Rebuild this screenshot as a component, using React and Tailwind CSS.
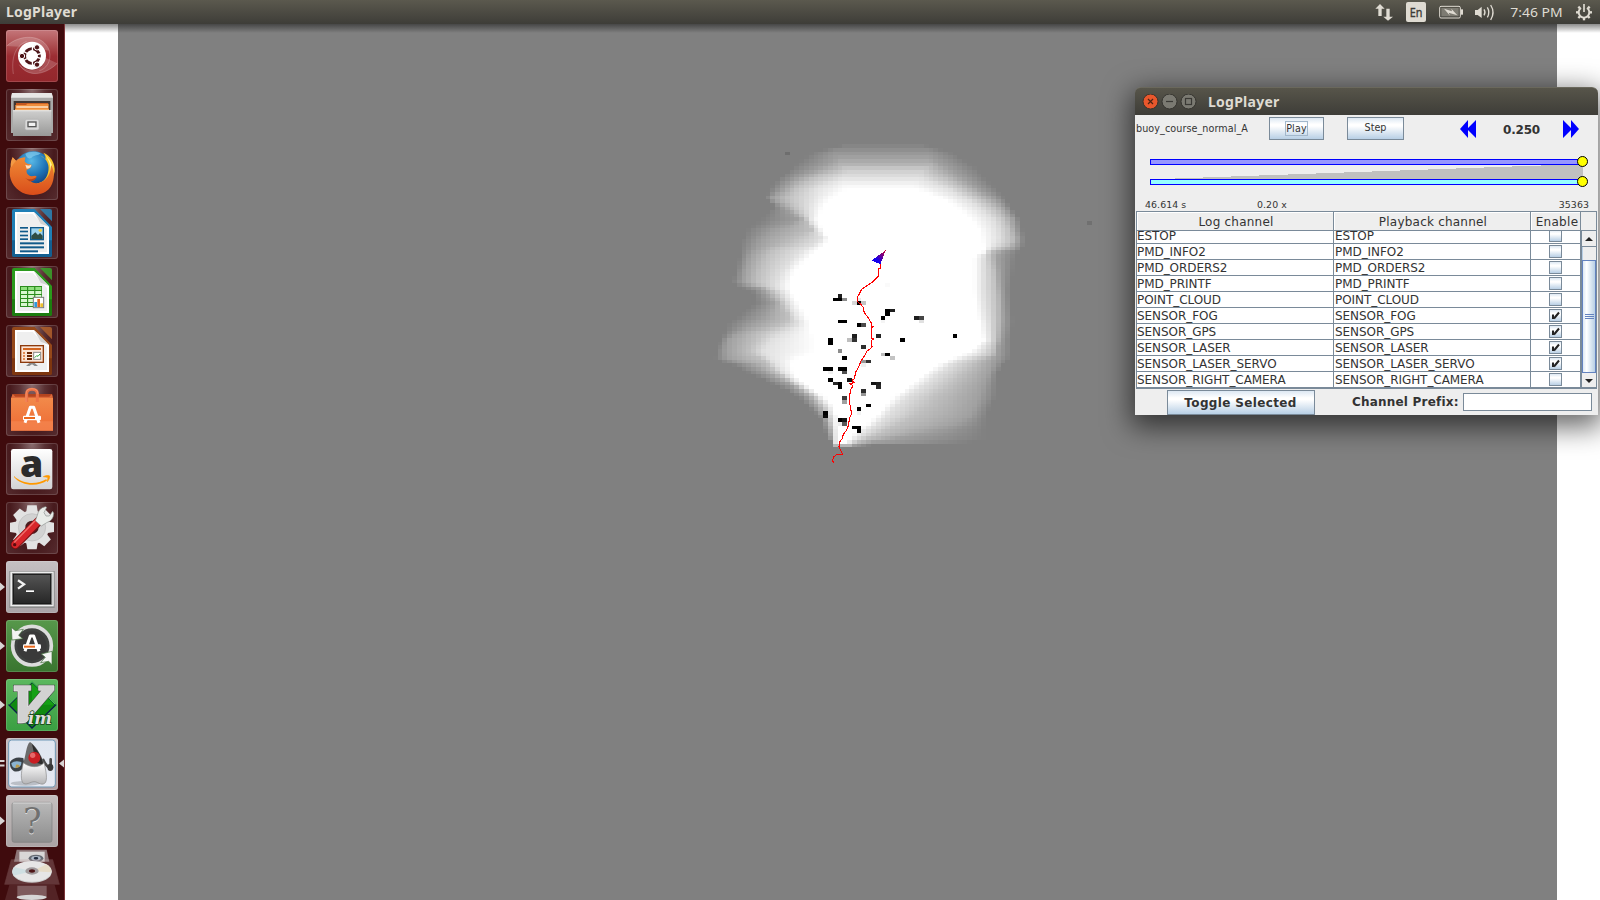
import React from "react";

/* ---------- occupancy map ---------- */

const CELL_W = 1439 / 300;
const CELL_H = 876 / 240;
const LEVELS = [128, 160, 192, 225, 255];

// Survey units are thirds of a pixel, origin at screen (700, 140).
// [y, peak, five rising x positions, five falling x positions]
const PROFILE = [
  [8, 129, 480, 490, 500, 510, 520, 540, 560, 580, 600, 620],
  [22, 136, 400, 470, 500, 510, 520, 540, 560, 580, 620, 700],
  [38, 150, 335, 430, 500, 500, 500, 580, 580, 600, 660, 755],
  [55, 163, 310, 410, 470, 500, 510, 590, 600, 630, 690, 785],
  [72, 178, 290, 385, 450, 500, 520, 600, 640, 670, 720, 810],
  [90, 205, 268, 345, 415, 490, 510, 600, 630, 690, 750, 835],
  [110, 222, 242, 300, 350, 440, 500, 590, 650, 725, 780, 850],
  [130, 242, 222, 265, 310, 380, 470, 590, 705, 765, 810, 872],
  [148, 255, 210, 248, 285, 345, 440, 650, 745, 795, 835, 890],
  [175, 255, 195, 215, 260, 335, 392, 725, 795, 840, 880, 915],
  [200, 255, 225, 250, 280, 325, 370, 770, 835, 880, 910, 932],
  [240, 255, 180, 300, 318, 328, 352, 812, 878, 915, 940, 958],
  [270, 255, 140, 225, 335, 350, 370, 838, 890, 930, 945, 967],
  [295, 255, 130, 190, 290, 368, 386, 845, 895, 935, 955, 972],
  [310, 255, 122, 180, 270, 350, 380, 848, 890, 935, 952, 972],
  [326, 255, 120, 170, 225, 315, 358, 858, 870, 900, 940, 966],
  [336, 255, 119, 160, 212, 300, 345, 850, 860, 875, 905, 955],
  [350, 255, 117, 150, 200, 285, 330, 820, 850, 870, 892, 948],
  [390, 255, 108, 135, 180, 250, 285, 820, 850, 880, 897, 940],
  [430, 255, 94, 130, 170, 230, 270, 820, 850, 885, 900, 935],
  [445, 255, 125, 180, 200, 232, 268, 820, 850, 885, 902, 932],
  [460, 255, 165, 195, 225, 248, 275, 820, 852, 888, 905, 932],
  [490, 255, 165, 225, 245, 265, 295, 825, 855, 890, 907, 935],
  [530, 255, 115, 195, 265, 285, 320, 832, 862, 890, 910, 938],
  [550, 255, 85, 165, 255, 300, 328, 840, 865, 890, 910, 940],
  [580, 255, 72, 110, 175, 250, 335, 845, 868, 889, 905, 935],
  [600, 255, 62, 85, 165, 215, 345, 850, 870, 888, 900, 932],
  [630, 255, 48, 80, 150, 190, 350, 815, 850, 880, 892, 935],
  [645, 255, 46, 82, 160, 195, 320, 780, 830, 875, 890, 935],
  [660, 255, 42, 90, 190, 215, 280, 745, 782, 835, 880, 930],
  [672, 255, 90, 150, 200, 225, 275, 720, 755, 820, 878, 912],
  [700, 255, 145, 200, 232, 250, 280, 675, 715, 790, 868, 890],
  [740, 255, 235, 280, 297, 308, 325, 626, 665, 745, 848, 889],
  [770, 255, 295, 322, 340, 355, 375, 580, 620, 705, 838, 887],
  [800, 255, 322, 348, 368, 383, 400, 555, 585, 680, 825, 872],
  [830, 255, 358, 374, 385, 395, 410, 525, 558, 640, 805, 862],
  [850, 255, 366, 382, 391, 398, 411, 505, 532, 600, 770, 860],
  [870, 255, 373, 388, 396, 402, 412, 470, 505, 560, 705, 859],
  [890, 255, 382, 392, 397, 404, 412, 450, 478, 518, 620, 858],
  [905, 255, 392, 396, 398, 404, 412, 440, 455, 475, 530, 856],
  [911, 255, 395, 398, 402, 406, 414, 430, 440, 446, 455, 560],
  [921, 128, 395, 398, 402, 406, 414, 430, 440, 446, 455, 480],
];

function sample(x, y) {
  if (y <= PROFILE[0][0] || y >= PROFILE[PROFILE.length - 1][0]) return 128;
  let i = 0;
  while (PROFILE[i + 1][0] < y) i += 1;
  const a = PROFILE[i];
  const b = PROFILE[i + 1];
  const t = (y - a[0]) / (b[0] - a[0]);
  const row = a.map((v, k) => v + (b[k] - v) * t);
  const xs = row.slice(2);
  const gs = [...LEVELS, ...[...LEVELS].reverse()];
  if (x <= xs[0] || x >= xs[9]) return 128;
  let k = 0;
  while (k < 8 && xs[k + 1] < x) k += 1;
  const span = xs[k + 1] - xs[k] || 1;
  const g = gs[k] + (gs[k + 1] - gs[k]) * ((x - xs[k]) / span);
  return Math.min(row[1], g);
}

const HITS = [
  [418, 468, 30], [404, 479, 0], [418, 479, 0], [433, 479, 140], [461, 489, 215], [475, 489, 0], [490, 489, 195], [475, 479, 235],
  [418, 545, 0], [433, 545, 0], [475, 555, 0], [490, 555, 75], [562, 511, 0], [577, 511, 30], [562, 522, 0], [547, 534, 0], [547, 544, 245],
  [649, 534, 30], [664, 534, 70], [664, 545, 225], [461, 588, 30], [461, 599, 50], [447, 599, 190], [534, 588, 35], [606, 599, 0],
  [763, 588, 0], [389, 599, 0], [389, 610, 0], [418, 632, 140], [490, 621, 45], [433, 654, 0], [547, 643, 190], [562, 643, 0], [577, 654, 195],
  [490, 664, 150], [505, 664, 50], [490, 675, 240], [375, 687, 0], [389, 687, 0], [418, 687, 0], [433, 687, 0], [433, 697, 80], [389, 697, 240],
  [389, 720, 0], [447, 720, 20], [404, 730, 40], [418, 730, 0], [418, 741, 0], [519, 730, 20], [534, 730, 30], [534, 741, 40], [490, 753, 45],
  [490, 764, 150], [433, 775, 60], [433, 786, 160], [505, 796, 0], [475, 807, 0], [475, 819, 242], [375, 819, 0], [375, 830, 10], [418, 840, 0],
  [433, 840, 20], [433, 851, 90], [418, 851, 235], [461, 862, 0], [475, 862, 0], [475, 873, 0], [562, 435, 250],
  [260, 40, 110], [1104, 247, 112],
];

function buildCells() {
  const cells = [];
  for (let r = 32; r <= 122; r += 1) {
    for (let c = 120; c <= 190; c += 1) {
      const ux = ((c + 0.5) * CELL_W + 118 - 700) * 3;
      const uy = ((r + 0.5) * CELL_H + 24 - 140) * 3;
      const g = Math.round(sample(ux, uy));
      if (g > 128) cells.push([c, r, g]);
    }
  }
  HITS.forEach(([x, y, g]) => {
    // The stray return on the right lies outside the swept area.
    const ux = x === 1104 ? 1169 : x;
    cells.push([
      Math.floor((ux / 3 + 700 - 118) / CELL_W),
      Math.floor((y / 3 + 140 - 24) / CELL_H),
      g,
    ]);
  });
  return cells;
}

const CELLS = buildCells();

const TRACK =
  "541,366 543,376 541,385 534,387 536,408 516,427 498,439 484,449 478,462 472,470 472,484 482,493 490,502 490,510 494,519 505,534 513,548 515,559 520,559 514,564 515,594 520,597 515,601 516,620 512,626 500,634 495,646 484,661 476,680 467,697 463,716 457,720 460,727 466,728 449,730 457,736 457,741 452,748 452,760 449,760 449,790 453,810 454,824 449,834 445,857 440,870 430,883 427,895 418,908 417,920 428,944 420,942 408,945 401,951 397,963 403,968";

function MapView() {
  return (
    <svg className="block h-[876px] w-[1439px] shrink-0 bg-[#808080]" viewBox="118 24 1439 876" shapeRendering="crispEdges">
      {CELLS.map(([c, r, g], i) => {
        const x0 = Math.round(118 + c * CELL_W);
        const x1 = Math.round(118 + (c + 1) * CELL_W);
        const y0 = Math.round(24 + r * CELL_H);
        const y1 = Math.round(24 + (r + 1) * CELL_H);
        return <rect key={i} x={x0} y={y0} width={x1 - x0} height={y1 - y0} fill={`rgb(${g},${g},${g})`} />;
      })}
      <linearGradient id="pose" x1="0" y1="1" x2="1" y2="0">
        <stop offset=".35" stopColor="#1400ee" />
        <stop offset="1" stopColor="#d00028" />
      </linearGradient>
      <g transform="translate(700 140) scale(.33333)">
        <polyline points={TRACK} fill="none" stroke="#f00" strokeWidth="3.2" />
        <path d="M515 361L541 373L557 331Z" fill="url(#pose)" />
      </g>
    </svg>
  );
}

/* ---------- launcher icons, drawn on a 156 unit tile ---------- */

const GLASS = "bg-[radial-gradient(ellipse_at_50%_0%,#8a6c6e_0%,#5a3134_35%,#471a1d_60%,#562c2f_100%)]";

function UbuntuIcon() {
  return (
    <>
      <g fill="none" stroke="#fff" strokeOpacity=".32" strokeWidth="2">
        <path d="M2 48C40 12 112 10 130 62C138 96 118 118 100 122" />
        <path d="M22 132C16 90 24 48 62 34" />
        <path d="M40 104C62 140 112 140 154 100" />
      </g>
      <path d="M2 48C40 12 112 10 130 62L118 60C100 30 60 30 40 50Z" fill="#fff" opacity=".18" />
      <path d="M40 104C62 140 112 140 154 100L120 84C110 122 70 130 40 104Z" fill="#fff" opacity=".18" />
      <circle cx="78" cy="79" r="42" fill="#400" opacity=".3" />
      <circle cx="78" cy="77" r="42" fill="#fff" />
      <circle cx="78" cy="78" r="22" fill="none" stroke="#4c1518" strokeWidth="9" />
      <g stroke="#fff" strokeWidth="4">
        <path d="M78 78L48 62M78 78L48 94M78 78L107 70M78 78L107 86M78 78L80 46M78 78L80 110" />
      </g>
      <circle cx="78" cy="78" r="17" fill="#fff" />
      <g fill="#4c1518" stroke="#fff" strokeWidth="3">
        <circle cx="48" cy="78" r="8" /><circle cx="93" cy="52" r="8" /><circle cx="93" cy="104" r="8" />
      </g>
    </>
  );
}

function FilesIcon() {
  return (
    <>
      <path d="M18 12H137L141 26V132H15V26Z" fill="#a9a9a8" />
      <path d="M18 12H137L141 26H15Z" fill="#e7e7e6" />
      <path d="M23 36H133V70H23Z" fill="#413632" />
      <path d="M30 42H126V64H30Z" fill="#c4571f" />
      <path d="M28 48H60L64 44H128V68H28Z" fill="#ef8d3c" />
      <path d="M31 52H126V56H31Z" fill="#fff0d8" />
      <path d="M27 60H129V66H27Z" fill="#f6a85c" />
      <path d="M21 64H136V141H21Z" fill="url(#gSilver)" />
      <path d="M21 64H136V67H21Z" fill="#e9e9e9" />
      <rect x="57" y="91" width="42" height="32" rx="5" fill="#dadada" stroke="#b1b1b1" strokeWidth="2" />
      <rect x="64" y="97" width="28" height="18" fill="#555" />
      <rect x="68" y="101" width="20" height="10" fill="#f2f2f2" />
    </>
  );
}

function FirefoxIcon() {
  return (
    <>
      <circle cx="82" cy="68" r="58" fill="url(#gGlobe)" />
      <path d="M58 18C66 10 92 8 104 16C96 24 84 20 76 30C66 34 62 28 58 18Z" fill="#8fd6f3" opacity=".6" />
      <path d="M102 22C124 34 132 52 126 74C120 100 98 108 90 104C116 120 140 104 146 70C148 46 134 22 112 14C118 22 120 28 118 34Z" fill="#f7c52c" />
      <path d="M118 22C138 40 144 62 138 84L132 82C136 60 132 40 118 22Z" fill="#fff29a" />
      <path d="M20 28L30 38C38 30 50 28 58 28L56 40C62 50 70 48 76 50C78 58 70 62 62 66C60 74 64 80 72 84C82 86 88 80 92 86C88 94 84 98 74 100C86 110 108 106 120 92C132 80 134 64 136 50C148 72 146 104 128 124C108 144 66 148 40 128C14 110 6 80 14 54C14 46 18 36 20 28Z" fill="url(#gFox)" />
      <path d="M20 28L30 38C24 46 20 50 16 58C12 48 16 36 20 28Z" fill="#f39a45" />
      <path d="M58 50C64 54 72 52 76 50C76 58 70 62 62 62Z" fill="#fbe2c4" />
      <path d="M58 90C66 96 80 96 92 86C88 96 80 100 70 100Z" fill="#9c2b12" opacity=".6" />
    </>
  );
}

function DocFrame({ color, dark, tint, children }) {
  return (
    <>
      <path d="M24 6H86L138 60V144Q138 150 132 150H24Q18 150 18 144V12Q18 6 24 6Z" fill={color} />
      <path d="M18 100H138V144Q138 150 132 150H24Q18 150 18 144Z" fill={dark} opacity=".6" />
      <path d="M102 6H132Q138 6 138 12V43Z" fill={tint} opacity=".85" />
      <path d="M27 15H84L129 60V141H27Z" fill="#fff" />
      <path d="M33 21H80L123 66V135H33Z" fill="#efefef" />
      <path d="M84 15L129 60L104 50Z" fill="#d2d2d2" />
      {children}
    </>
  );
}

function WriterIcon() {
  return (
    <DocFrame color="#1f7fb6" dark="#0b4a78" tint="#2a86b8">
      <g fill="#115a8a">
        <rect x="42" y="60" width="24" height="5" /><rect x="42" y="71" width="24" height="5" />
        <rect x="42" y="83" width="24" height="5" /><rect x="42" y="94" width="24" height="5" />
        <rect x="42" y="106" width="72" height="6" /><rect x="42" y="118" width="72" height="6" /><rect x="42" y="130" width="54" height="6" />
      </g>
      <rect x="72" y="60" width="42" height="40" fill="#115a8a" />
      <rect x="76" y="64" width="34" height="32" fill="#9fd4ef" />
      <path d="M76 96V86L88 76L96 84L102 78L110 86V96Z" fill="#2f4d44" />
      <circle cx="103" cy="70" r="5" fill="#f3cf3e" />
    </DocFrame>
  );
}

function CalcIcon() {
  return (
    <DocFrame color="#2b9a1c" dark="#126a07" tint="#3aa52c">
      <rect x="42" y="60" width="66" height="63" fill="#2b8c1c" />
      {[0, 1, 2, 3, 4].map((r) =>
        [0, 1, 2].map((c) => (
          <rect key={`${r}${c}`} x={45 + c * 21.5} y={63 + r * 12} width="18" height="9" fill={r ? "#d9f7cf" : "#8fe07d"} />
        )),
      )}
      <rect x="82" y="94" width="31" height="31" fill="#fff" stroke="#7a7a7a" strokeWidth="3" />
      <rect x="85" y="108" width="8" height="15" fill="#2f97dc" />
      <rect x="94" y="99" width="8" height="24" fill="#e2631c" />
      <rect x="103" y="112" width="8" height="11" fill="#edc02d" />
    </DocFrame>
  );
}

function ImpressIcon() {
  return (
    <DocFrame color="#95481a" dark="#6f2c08" tint="#b0602c">
      <rect x="44" y="62" width="68" height="50" fill="#fbe4d6" stroke="#8d3a0d" strokeWidth="4" />
      <rect x="51" y="69" width="54" height="6" fill="#d2641f" />
      <g fill="#e28a53"><rect x="51" y="81" width="6" height="6" /><rect x="51" y="90" width="6" height="6" /><rect x="51" y="99" width="6" height="6" /></g>
      <g fill="#6b2604"><rect x="63" y="81" width="15" height="6" /><rect x="63" y="90" width="15" height="6" /><rect x="63" y="99" width="15" height="6" /></g>
      <rect x="83" y="82" width="21" height="21" fill="#fff" stroke="#8a8a8a" strokeWidth="3" />
      <path d="M86 98L92 92L96 94L102 87" fill="none" stroke="#2da43a" strokeWidth="3" />
      <path d="M70 114H86L96 123H86L78 118L70 123H60Z" fill="#8a8a8a" />
    </DocFrame>
  );
}

function LetterA() {
  return (
    <>
      <path d="M57 116L73 70H83L99 116" fill="none" stroke="#fff" strokeWidth="9" strokeLinejoin="round" />
      <rect x="51" y="95" width="54" height="14" rx="4" fill="#fff" />
      <rect x="54" y="99" width="33" height="6" fill="#ec6a1e" />
    </>
  );
}

function SoftwareIcon() {
  return (
    <>
      <path d="M20 30H138L141 44H15Z" fill="#b3441f" />
      <path d="M20 30L28 38H130L138 30L141 44H15Z" fill="#dd6a3b" />
      <path d="M15 42H141V140H15Z" fill="url(#gBag)" />
      <path d="M15 112H141V140H15Z" fill="#f58a55" opacity=".6" />
      <path d="M62 54V30Q62 16 78 16Q94 16 94 30V54" fill="none" stroke="#ee7346" strokeWidth="9" />
      <path d="M60 54V30Q60 14 78 14Q96 14 96 30" fill="none" stroke="#f7a07a" strokeWidth="2" />
      <LetterA />
    </>
  );
}

function AmazonIcon() {
  return (
    <>
      <rect x="15" y="18" width="124" height="121" rx="7" fill="url(#gPaper)" />
      <text x="77" y="101" textAnchor="middle" fontFamily="'Open Sans', sans-serif" fontWeight="800" fontSize="112" fill="#2b2b2b">a</text>
      <path d="M24 99C48 124 94 126 120 109L124 112C98 132 46 130 24 102Z" fill="#f90" />
      <path d="M112 101C120 97 128 97 131 99C132 104 128 112 124 116C124 110 127 105 125 103C122 102 116 102 112 101Z" fill="#f90" stroke="#f90" strokeWidth="2" />
    </>
  );
}

function SettingsIcon() {
  return (
    <>
      <g fill="#e2e2e2">
        {[0, 45, 90, 135, 180, 225, 270, 315].map((a) => (
          <path key={a} d="M64 10H92L96 34H60Z" transform={`rotate(${a} 78 76)`} />
        ))}
        <circle cx="78" cy="76" r="51" />
      </g>
      <circle cx="78" cy="76" r="41" fill="#d2d2d2" stroke="#bdbdbd" strokeWidth="2" />
      <circle cx="78" cy="76" r="20" fill="#4a1d1f" />
      <path d="M28 128L100 56" stroke="#7c0f12" strokeWidth="27" strokeLinecap="round" />
      <path d="M28 127L94 60" stroke="#d8262a" strokeWidth="22" strokeLinecap="round" />
      <path d="M26 120L86 58" stroke="#f0706c" strokeWidth="4" strokeLinecap="round" />
      <path d="M88 56L94 40Q98 18 118 14L122 16L114 32L120 42L130 42L140 28L143 34Q142 56 122 62L106 72Z" fill="#e9ece9" stroke="#8c9390" strokeWidth="2" />
      <circle cx="26" cy="128" r="5" fill="#5c0b0d" />
    </>
  );
}

function TerminalIcon() {
  return (
    <>
      <rect x="10" y="30" width="136" height="111" fill="#8b8b8b" />
      <rect x="13" y="32" width="130" height="104" fill="#eee" />
      <rect x="18" y="36" width="121" height="96" fill="#8d8d8d" />
      <rect x="22" y="40" width="112" height="88" fill="url(#gTerm)" stroke="#111" strokeWidth="3" />
      <path d="M36 58L54 70L36 83" fill="none" stroke="#f2f2f2" strokeWidth="7" />
      <rect x="60" y="88" width="24" height="5" fill="#fff" />
    </>
  );
}

function UpdaterIcon() {
  return (
    <>
      <circle cx="78" cy="78" r="56" fill="#3f4240" />
      <circle cx="78" cy="78" r="44" fill="#3a3a3a" />
      <circle cx="78" cy="77" r="58" fill="none" stroke="#dcdcdc" strokeWidth="11" />
      <path d="M18 60L16 22L28 32L52 28L38 46L50 56Z" fill="#f4f4f4" stroke="#3c6d35" strokeWidth="2" />
      <path d="M138 94L138 134L128 124L104 128L118 112L106 102Z" fill="#f4f4f4" stroke="#3c6d35" strokeWidth="2" />
      <g transform="translate(0 -22)"><LetterA /></g>
    </>
  );
}

function VimIcon() {
  return (
    <>
      <path d="M78 10L149 78L78 147L9 78Z" fill="#108a10" stroke="#0a1f4a" strokeWidth="4" />
      <path d="M78 12L146 77L78 77Z" fill="#15a015" />
      <path d="M9 76L78 8L148 76" fill="none" stroke="#4fe04f" strokeWidth="3" />
      <path d="M24 20H74V34H66V84L108 34H98V20H144V34L64 126Q60 132 46 132H36V36H24Z" fill="#d2d2d2" stroke="#4c4c4c" strokeWidth="5" />
      <path d="M24 20H74V34H66V84L108 34H98V20H144V34L64 126Q60 132 46 132H36V36H24Z" fill="#d2d2d2" stroke="#ececec" strokeWidth="2" />
      <text x="66" y="134" fontFamily="'DejaVu Serif', serif" fontStyle="italic" fontWeight="700" fontSize="50" textLength="72" lengthAdjust="spacingAndGlyphs" fill="#dedede" stroke="#124312" strokeWidth="4" paintOrder="stroke">im</text>
    </>
  );
}

function DukeIcon() {
  return (
    <>
      <rect x="8" y="6" width="140" height="141" rx="9" fill="url(#gDukeBg)" stroke="#6f98b5" strokeWidth="3" />
      <ellipse cx="58" cy="136" rx="44" ry="7" fill="#8f969c" opacity=".5" />
      <path d="M12 72Q24 54 52 60L56 84Q44 104 24 100Q10 92 12 72Z" fill="#3c4247" />
      <path d="M16 76Q26 66 46 72Q48 88 28 90Q18 90 16 76Z" fill="#8cb4d0" />
      <path d="M30 80Q40 78 42 86L28 91Z" fill="#b99a4a" />
      <path d="M112 66Q120 84 130 88M134 64V88" stroke="#4a4a4a" strokeWidth="8" fill="none" strokeLinecap="round" />
      <ellipse cx="133" cy="88" rx="9" ry="11" fill="#3a3a3a" />
      <path d="M72 12C86 20 108 52 116 82C104 90 60 90 50 80C60 56 60 20 72 12Z" fill="#6b6b6b" />
      <path d="M78 18C92 32 108 56 112 80L90 74Z" fill="#2c2c2c" />
      <path d="M52 74C72 90 100 90 114 74C120 98 126 128 116 136C104 144 94 130 84 131C74 131 60 144 50 134C42 120 48 92 52 74Z" fill="url(#gBody)" stroke="#8a8a8a" strokeWidth="2" />
      <circle cx="85" cy="59" r="18" fill="#c91d22" />
      <circle cx="80" cy="52" r="8" fill="#ef7a7a" opacity=".8" />
    </>
  );
}

function UnknownIcon() {
  return (
    <>
      <rect x="18" y="22" width="120" height="120" rx="7" fill="url(#gUnknown)" stroke="#7d7d7d" strokeWidth="2" />
      <path d="M20 24H136" stroke="#d8d8d8" strokeWidth="3" />
      <text x="79" y="118" textAnchor="middle" fontFamily="'DejaVu Serif', serif" fontSize="104" fill="#dcdcdc">?</text>
      <text x="79" y="115" textAnchor="middle" fontFamily="'DejaVu Serif', serif" fontSize="104" fill="#707070">?</text>
    </>
  );
}

function IconDefs() {
  const stops = (id, a, b) => (
    <linearGradient id={id} x1="0" y1="0" x2="0" y2="1">
      <stop offset="0" stopColor={a} />
      <stop offset="1" stopColor={b} />
    </linearGradient>
  );
  return (
    <svg className="absolute h-0 w-0">
      {stops("gSilver", "#cfcfce", "#989897")}
      {stops("gFox", "#f08a35", "#d94d1a")}
      {stops("gBag", "#f28a4a", "#ee6a34")}
      {stops("gPaper", "#ffffff", "#d2d2d4")}
      {stops("gBody", "#ffffff", "#b4b4b6")}
      {stops("gTerm", "#555555", "#262626")}
      {stops("gDukeBg", "#dfe6f0", "#e6e9f2")}
      {stops("gUnknown", "#b9b9b9", "#8d8d8d")}
      <radialGradient id="gGlobe" cx=".45" cy=".25" r=".75">
        <stop offset="0" stopColor="#58b8e6" />
        <stop offset=".5" stopColor="#1f74b8" />
        <stop offset="1" stopColor="#102c66" />
      </radialGradient>
    </svg>
  );
}

const LAUNCHER = [
  { name: "dash", Icon: UbuntuIcon, tile: "bg-linear-to-b from-[#c4767a] via-[#9c2d33] to-[#93272c]" },
  { name: "files", Icon: FilesIcon, tile: GLASS },
  { name: "firefox", Icon: FirefoxIcon, tile: GLASS },
  { name: "writer", Icon: WriterIcon, tile: GLASS },
  { name: "calc", Icon: CalcIcon, tile: GLASS },
  { name: "impress", Icon: ImpressIcon, tile: GLASS },
  { name: "software", Icon: SoftwareIcon, tile: GLASS },
  { name: "amazon", Icon: AmazonIcon, tile: GLASS },
  { name: "settings", Icon: SettingsIcon, tile: GLASS },
  { name: "terminal", Icon: TerminalIcon, tile: "bg-linear-to-b from-[#c5bfc2] to-[#aaa4a7]", left: "one" },
  { name: "updater", Icon: UpdaterIcon, tile: "bg-linear-to-b from-[#57984b] to-[#39752f]", left: "one" },
  { name: "vim", Icon: VimIcon, tile: "bg-linear-to-b from-[#5cb85f] to-[#3a9f42]", left: "one" },
  { name: "duke", Icon: DukeIcon, tile: "bg-linear-to-b from-[#c4babd] to-[#b09ea1]", left: "two", active: true },
  { name: "unknown", Icon: UnknownIcon, tile: "bg-linear-to-b from-[#c4bfbf] to-[#aba3a4]", left: "one" },
];

function Launcher() {
  return (
    <div className="flex h-[876px] w-[65px] shrink-0 flex-col overflow-hidden border-r border-[#7b3438] bg-[#3f0b0d] pt-[6px]">
      <IconDefs />
      {LAUNCHER.map(({ name, Icon, tile, left, active }) => (
        <div key={name} className={`flex shrink-0 ${name === "duke" ? "h-[57px]" : "h-[59px]"}`}>
          <svg className="h-[52px] w-[6px]" viewBox="0 0 6 52">
            {left === "one" && <path d="M0 21.5L5 26L0 30Z" fill="#d9d4d4" />}
            {left === "two" && <path d="M0 22H4.5V24H0ZM0 26.5H4.5V28.5H0Z" fill="#d9d4d4" />}
          </svg>
          <div className={`h-[52px] w-[52px] rounded-[3px] shadow-[inset_0_0_0_1px_rgba(255,255,255,0.15)] ${tile}`}>
            <svg className="block h-[52px] w-[52px]" viewBox="0 0 156 156"><Icon /></svg>
          </div>
          <svg className="h-[52px] w-[6px]" viewBox="0 0 6 52">
            {active && <path d="M6 21.5L1 25.5L6 29.5Z" fill="#d9d4d4" />}
          </svg>
        </div>
      ))}
      <svg className="-mt-[7px] block h-[54px] w-[64px] shrink-0" viewBox="0 0 192 162">
        <path d="M50 8H140L148 44H42Z" fill="#a7989a" opacity=".75" />
        <path d="M58 14H134V44H58Z" fill="#d9d7d7" />
        <ellipse cx="108" cy="34" rx="22" ry="11" fill="#666b73" />
        <ellipse cx="108" cy="34" rx="14" ry="7" fill="#aeb9c8" />
        <ellipse cx="108" cy="34" rx="7" ry="4" fill="#202a3c" />
        <path d="M34 38H158L178 112H14Z" fill="#b69a9c" opacity=".3" stroke="#b69a9c" strokeWidth="2" />
        <ellipse cx="96" cy="76" rx="59" ry="31" fill="#c6c6c6" />
        <ellipse cx="96" cy="73" rx="59" ry="31" fill="#e6e6e6" />
        <path d="M96 73L140 52Q156 64 154 76Z" fill="#e6dcc8" />
        <path d="M96 73L42 60Q34 72 40 86Z" fill="#cfdfe2" />
        <ellipse cx="96" cy="72" rx="20" ry="11" fill="#a09a9c" />
        <ellipse cx="96" cy="72" rx="9" ry="5" fill="#4d1416" />
        <path d="M28 114H164L178 162H14Z" fill="#8f6d70" opacity=".25" />
        <path d="M52 116H140V150Q96 162 52 150Z" fill="#9b8183" opacity=".6" />
        <ellipse cx="95" cy="151" rx="45" ry="8" fill="#d6d6d6" />
      </svg>
    </div>
  );
}

/* ---------- top panel ---------- */

function TopPanel() {
  return (
    <div className="flex h-6 w-full items-center bg-linear-to-b from-[#5b594e] to-[#3e3d38] pl-[6px] font-['Noto_Sans',sans-serif] text-[#dfdbd2]">
      <span className="text-[14px] leading-6 font-bold tracking-[0.22px]">LogPlayer</span>
      <div className="ml-auto flex h-6 items-center">
        <svg className="h-6 w-[260px]" viewBox="0 0 780 72" fill="#dfdbd2">
          <path d="M120 12L134 26H125V48H115V26H106ZM144 62L130 50H139V26H149V50H159Z" />
          <rect x="198" y="6" width="60" height="60" rx="6" />
          <text x="228" y="50" textAnchor="middle" fontFamily="'Noto Sans', sans-serif" fontSize="36" fill="#3c3b37" stroke="#3c3b37" strokeWidth="1" textLength="38" lengthAdjust="spacingAndGlyphs">En</text>
          <rect x="299" y="19" width="62" height="35" rx="4" fill="none" stroke="#dfdbd2" strokeWidth="3" />
          <rect x="304" y="24" width="52" height="25" fill="#7d7b72" />
          <path d="M362 28H369V44H362Z" />
          <path d="M312 26L336 34L334 26L352 46L326 38L330 47Z" />
          <path d="M405 30H413L425 20V54L413 45H405Z" />
          <path d="M432 28Q438 37 432 46M442 22Q451 37 442 52M452 15Q466 37 452 60" fill="none" stroke="#dfdbd2" strokeWidth="4" />
          <text x="511" y="50" fontFamily="'Noto Sans', sans-serif" fontSize="40" textLength="157" lengthAdjust="spacingAndGlyphs">7:46 PM</text>
          <g fill="none" stroke="#dfdbd2">
            <path d="M723 24A16 16 0 1 0 741 24" strokeWidth="6" />
            <path d="M732 12V36" strokeWidth="5" />
            {[45, 90, 135, 180, 225, 270, 315].map((a) => (
              <path key={a} d="M732 20V13" strokeWidth="7" transform={`rotate(${a} 732 37)`} />
            ))}
          </g>
        </svg>
      </div>
    </div>
  );
}

/* ---------- LogPlayer window ---------- */

const ROWS = [
  ["ESTOP", false],
  ["PMD_INFO2", false],
  ["PMD_ORDERS2", false],
  ["PMD_PRINTF", false],
  ["POINT_CLOUD", false],
  ["SENSOR_FOG", true],
  ["SENSOR_GPS", true],
  ["SENSOR_LASER", true],
  ["SENSOR_LASER_SERVO", true],
  ["SENSOR_RIGHT_CAMERA", false],
];

const METAL = "border border-[#7a8a99] bg-[linear-gradient(to_bottom,#dde8f3_0%,#ffffff_30%,#ffffff_38%,#b8cfe5_100%)]";

function TitleBar() {
  return (
    <div className="flex h-7 items-center rounded-t-[6px] border-t border-[#6a685c] bg-linear-to-b from-[#57554a] to-[#3e3d38] pl-[7px]">
      <svg className="h-4 w-[56px]" viewBox="0 0 56 16">
        <circle cx="8.5" cy="7.5" r="7.5" fill="#e9572c" stroke="#38332c" />
        <path d="M6 5L11 10M11 5L6 10" stroke="#4c2414" strokeWidth="1.2" />
        <circle cx="27.5" cy="7.5" r="7.5" fill="#7b7a72" stroke="#35342f" />
        <path d="M24 7.5H31" stroke="#3a3935" strokeWidth="1.2" />
        <circle cx="46.5" cy="7.5" r="7.5" fill="#7b7a72" stroke="#35342f" />
        <rect x="43.5" y="4.5" width="6" height="6" fill="none" stroke="#3a3935" strokeWidth="1.2" />
      </svg>
      <span className="-mt-px ml-[10px] font-['Noto_Sans',sans-serif] text-[14px] font-bold tracking-[0.25px] text-[#dfdbd2]">LogPlayer</span>
    </div>
  );
}

function Controls() {
  return (
    <div className="flex h-[29px] items-start pt-[2px] text-[9.6px]">
      <span className="w-[134px] pl-px leading-[24px] tracking-[0.08px] whitespace-nowrap">buoy_course_normal_A</span>
      <div className={`flex h-[23px] w-[55px] items-center justify-center ${METAL}`}>
        <span className="border border-[#a3b8cc] leading-[13px] tracking-[0.15px]">Play</span>
      </div>
      <div className={`ml-[23px] flex h-[23px] w-[57px] items-center justify-center ${METAL}`}>Step</div>
      <svg className="mt-[3px] ml-[56px] h-[18px] w-4" viewBox="0 0 16 18" fill="#00f">
        <path d="M0 9L8 0V18ZM7 9L16 0V18Z" />
      </svg>
      <span className="ml-[26px] w-[61px] pl-px text-[12px] leading-[26px] font-bold tracking-[-0.2px]">0.250</span>
      <svg className="mt-[3px] h-[18px] w-4" viewBox="0 0 16 18" fill="#00f">
        <path d="M0 0L9 9L0 18ZM8 0L16 9L8 18Z" />
      </svg>
    </div>
  );
}

function Scrubber() {
  return (
    <svg className="block h-[50px] w-[463px]" viewBox="1135 144 463 50">
      <path d="M1150 179.4L1583 164V181H1150Z" fill="#c0c0c0" shapeRendering="crispEdges" />
      <rect x="1150.5" y="159.5" width="432" height="5" fill="#9696ff" stroke="#00f" />
      <rect x="1150.5" y="179.5" width="432" height="5" fill="#96ffff" stroke="#00f" />
      <circle cx="1582.5" cy="161.5" r="5" fill="#ff0" stroke="#000" />
      <circle cx="1582.5" cy="181.5" r="5" fill="#ff0" stroke="#000" />
    </svg>
  );
}

function Check({ on }) {
  return (
    <div className={`h-[13px] w-[13px] ${METAL}`}>
      {on && (
        <svg className="block h-[11px] w-[11px]" viewBox="0 0 11 11">
          <path d="M3 4.5V9M4 8.5L9 2.5" fill="none" stroke="#222" strokeWidth="2" />
        </svg>
      )}
    </div>
  );
}

function ScrollBar() {
  return (
    <div className="flex h-[157px] w-4 flex-col border-l border-[#7a8a99] bg-[#eee]">
      <div className="flex h-4 items-center justify-center border-b border-[#7a8a99]">
        <svg className="h-1 w-2" viewBox="0 0 8 4"><path d="M0 4L4 0L8 4Z" fill="#222" /></svg>
      </div>
      <div className="h-[13px] border-l border-[#b8cfe5]" />
      <div className="flex h-[113px] flex-col items-center justify-center gap-px border border-[#6382bf] bg-linear-to-r from-[#dde8f3] via-[#fff] via-30% to-[#b8cfe5]">
        <div className="h-px w-[9px] bg-[#6382bf]" />
        <div className="h-px w-[9px] bg-[#6382bf]" />
        <div className="h-px w-[9px] bg-[#6382bf]" />
      </div>
      <div className="flex h-[15px] items-center justify-center">
        <svg className="h-1 w-2" viewBox="0 0 8 4"><path d="M0 0L4 4L8 0Z" fill="#222" /></svg>
      </div>
    </div>
  );
}

function ChannelTable() {
  return (
    <div className="ml-px h-[178px] w-[461px] border border-b-2 border-[#7a8a99] text-[12px]">
      <div className="flex h-[19px] border-b border-[#7a8a99] text-center leading-[21px] tracking-[0.22px]">
        <div className="w-[197px] border-r border-[#7a8a99] pl-[2px] shadow-[inset_1px_1px_0_#fff]">Log channel</div>
        <div className="w-[197px] border-r border-[#7a8a99] pl-[2px] shadow-[inset_1px_1px_0_#fff]">Playback channel</div>
        <div className="w-[50px] border-r border-[#7a8a99] pl-[3px] tracking-[0.3px] shadow-[inset_1px_1px_0_#fff]">Enable</div>
      </div>
      <div className="flex h-[156px] overflow-hidden">
        <div className="-mt-[3px] w-[444px]">
          {ROWS.map(([name, on]) => (
            <div key={name} className="flex h-4 border-b border-[#7a8a99] bg-white leading-[16px] tracking-[-0.06px]">
              <div className="h-[15px] w-[197px] border-r border-[#7a8a99] whitespace-nowrap">{name}</div>
              <div className="h-[15px] w-[197px] border-r border-[#7a8a99] pl-px whitespace-nowrap">{name}</div>
              <div className="flex h-[15px] w-[50px] justify-center border-r border-[#7a8a99] pt-px"><Check on={on} /></div>
            </div>
          ))}
        </div>
        <ScrollBar />
      </div>
    </div>
  );
}

function LogWindow() {
  return (
    <div className="absolute top-[87px] left-[1135px] w-[463px] rounded-t-[6px] shadow-[0_8px_28px_4px_rgba(0,0,0,0.6)]">
      <TitleBar />
      <div className="h-[300px] bg-[#eee] font-['DejaVu_Sans',sans-serif] text-[#333]">
        <Controls />
        <Scrubber />
        <div className="flex h-[17px] text-[9.4px] leading-[22px] tracking-[0.08px]">
          <span className="ml-[10px] w-[112px]">46.614 s</span>
          <span>0.20 x</span>
          <span className="mr-[9px] ml-auto">35363</span>
        </div>
        <ChannelTable />
        <div className="flex items-start text-[12px] font-bold">
          <div className={`mt-px ml-[32px] flex h-[25px] w-[148px] items-center justify-center pr-px tracking-[0.35px] ${METAL}`}>Toggle Selected</div>
          <span className="ml-[37px] w-[111px] leading-[27px] tracking-[0.2px] whitespace-nowrap">Channel Prefix:</span>
          <div className="mt-[4px] h-[18px] w-[129px] border border-[#7a8a99] bg-white" />
        </div>
      </div>
    </div>
  );
}

export default function App() {
  return (
    <div className="relative h-[900px] w-[1600px] overflow-hidden bg-white">
      <TopPanel />
      <div className="flex">
        <Launcher />
        <div className="h-[876px] w-[53px] shrink-0 bg-white" />
        <MapView />
      </div>
      <div className="absolute top-6 left-[65px] h-[9px] w-[1535px] bg-linear-to-b from-black/45 to-transparent" />
      <LogWindow />
    </div>
  );
}
